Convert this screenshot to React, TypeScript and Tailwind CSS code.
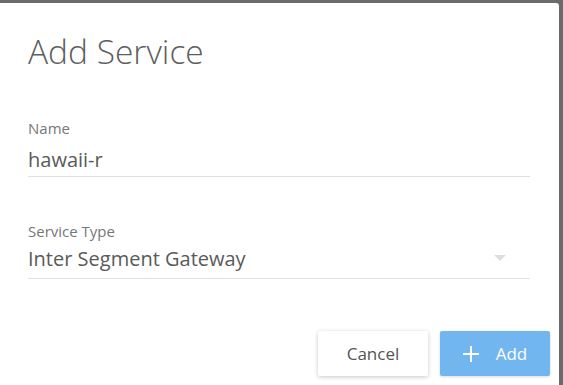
import React from "react";

export default function App() {
  return (
    <div
      className="w-[563px] h-[385px] bg-[#6b6b6b] pt-[3px] pr-[4px] overflow-hidden"
      style={{ fontFamily: '"Open Sans", "Noto Sans", sans-serif' }}
    >
      <div className="h-full bg-white rounded-tr-[3px] flex flex-col">
        <div className="pl-[28px] pr-[29px] pt-[25px]">
          <h1 className="text-[33.5px] leading-[46px] text-[#5e5e5e] font-light">Add Service</h1>

          <div className="mt-[44px]">
            <div className="text-[15px] leading-[20px] text-[#777777]">Name</div>
            <div className="mt-[8px] pb-[3px] border-b border-[#e0e0e0] text-[20px] leading-[27px] text-[#5a5a5a]">
              hawaii-r
            </div>
          </div>

          <div className="mt-[44px]">
            <div className="text-[15px] leading-[20px] text-[#777777]">Service Type</div>
            <div className="mt-[4px] pb-[6px] border-b border-[#e0e0e0] flex items-start justify-between">
              <span className="text-[20px] leading-[27px] text-[#5a5a5a]">Inter Segment Gateway</span>
              <svg width="12" height="6" viewBox="0 0 12 6" className="mt-[10px] mr-[24px]">
                <path d="M0 0 L12 0 L6 6 Z" fill="#dedede" />
              </svg>
            </div>
          </div>
        </div>

        <div className="mt-[52px] pr-[9px] flex justify-end gap-[12px]">
          <button className="w-[110px] h-[45px] bg-white rounded-[2px] shadow-[0_1px_4px_rgba(0,0,0,0.22)] text-[17px] text-[#555555] flex items-center justify-center">
            Cancel
          </button>
          <button className="w-[110px] h-[45px] bg-[#72b6f0] rounded-[2px] shadow-[0_1px_3px_rgba(0,0,0,0.15)] text-[17px] text-white flex items-center justify-center gap-[17px]">
            <svg width="16" height="16" viewBox="0 0 16 16">
              <path d="M8 0 V16 M0 8 H16" stroke="#ffffff" strokeWidth="2" />
            </svg>
            <span>Add</span>
          </button>
        </div>
      </div>
    </div>
  );
}
